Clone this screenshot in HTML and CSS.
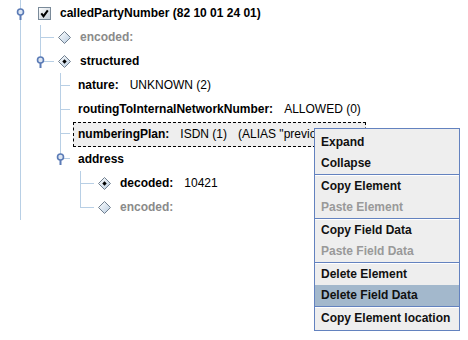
FILE: index.html
```html
<!DOCTYPE html>
<html lang="en">
<head>
    <meta charset="UTF-8">
    <title>Element tree</title>
    <link rel="stylesheet" href="styles.css">
</head>
<body>
    <div class="tree">
        <ul class="level">
            <li class="node root">
                <div class="row">
                    <span class="handle"><svg width="9" height="13" viewBox="0 0 9 13"><rect x="3.5" y="6" width="2" height="6" fill="#5b7bb6"/><circle cx="4.5" cy="4" r="3" fill="#dde6f2" stroke="#5b7bb6" stroke-width="1.6"/></svg></span>
                    <span class="icon"><svg width="13" height="13" viewBox="0 0 13 13"><defs><linearGradient id="cb" x1="0" y1="0" x2="1" y2="1"><stop offset="0" stop-color="#ffffff"/><stop offset="1" stop-color="#c2ccd6"/></linearGradient></defs><rect x="0.5" y="0.5" width="12" height="12" fill="url(#cb)" stroke="#7a8a99"/><path d="M3.3 6.3 L5.5 9.2 L9.8 3.3" fill="none" stroke="#000" stroke-width="2"/></svg></span>
                    <span class="label"><b>calledPartyNumber (82 10 01 24 01)</b></span>
                </div>
                <ul class="level">
                    <li class="node">
                        <div class="row link">
                            <span class="icon"><svg width="13" height="13" viewBox="0 0 13 13"><defs><linearGradient id="dm" x1="0" y1="0" x2="1" y2="1"><stop offset="0" stop-color="#ffffff"/><stop offset="1" stop-color="#b8cce0"/></linearGradient></defs><path d="M6.5 0.5 L12.5 6.5 L6.5 12.5 L0.5 6.5 Z" fill="url(#dm)" stroke="#707f8f"/></svg></span>
                            <span class="label muted"><b>encoded:</b></span>
                        </div>
                    </li>
                    <li class="node">
                        <div class="row link">
                            <span class="handle"><svg width="9" height="13" viewBox="0 0 9 13"><rect x="3.5" y="6" width="2" height="6" fill="#5b7bb6"/><circle cx="4.5" cy="4" r="3" fill="#dde6f2" stroke="#5b7bb6" stroke-width="1.6"/></svg></span>
                            <span class="icon"><svg width="13" height="13" viewBox="0 0 13 13"><path d="M6.5 0.5 L12.5 6.5 L6.5 12.5 L0.5 6.5 Z" fill="url(#dm)" stroke="#707f8f"/><path d="M6.5 4.3 L8.7 6.5 L6.5 8.7 L4.3 6.5 Z" fill="#000"/></svg></span>
                            <span class="label"><b>structured</b></span>
                        </div>
                        <ul class="level">
                            <li class="node">
                                <div class="row link short">
                                    <span class="label"><b>nature:</b><span class="value">UNKNOWN (2)</span></span>
                                </div>
                            </li>
                            <li class="node">
                                <div class="row link short">
                                    <span class="label"><b>routingToInternalNetworkNumber:</b><span class="value">ALLOWED (0)</span></span>
                                </div>
                            </li>
                            <li class="node">
                                <div class="row link short tall">
                                    <span class="label focused"><b>numberingPlan:</b><span class="value">ISDN (1)</span><span class="value">(ALIAS "previo</span></span>
                                </div>
                            </li>
                            <li class="node">
                                <div class="row link short tall">
                                    <span class="handle"><svg width="9" height="13" viewBox="0 0 9 13"><rect x="3.5" y="6" width="2" height="6" fill="#5b7bb6"/><circle cx="4.5" cy="4" r="3" fill="#dde6f2" stroke="#5b7bb6" stroke-width="1.6"/></svg></span>
                                    <span class="label"><b>address</b></span>
                                </div>
                                <ul class="level">
                                    <li class="node">
                                        <div class="row link">
                                            <span class="icon"><svg width="13" height="13" viewBox="0 0 13 13"><path d="M6.5 0.5 L12.5 6.5 L6.5 12.5 L0.5 6.5 Z" fill="url(#dm)" stroke="#707f8f"/><path d="M6.5 4.3 L8.7 6.5 L6.5 8.7 L4.3 6.5 Z" fill="#000"/></svg></span>
                                            <span class="label"><b>decoded:</b><span class="value">10421</span></span>
                                        </div>
                                    </li>
                                    <li class="node">
                                        <div class="row link">
                                            <span class="icon"><svg width="13" height="13" viewBox="0 0 13 13"><path d="M6.5 0.5 L12.5 6.5 L6.5 12.5 L0.5 6.5 Z" fill="url(#dm)" stroke="#707f8f"/></svg></span>
                                            <span class="label muted"><b>encoded:</b></span>
                                        </div>
                                    </li>
                                </ul>
                            </li>
                        </ul>
                    </li>
                </ul>
            </li>
        </ul>
    </div>

    <div class="menu">
        <div class="item">Expand</div>
        <div class="item">Collapse</div>
        <div class="sep"></div>
        <div class="item">Copy Element</div>
        <div class="item disabled">Paste Element</div>
        <div class="sep"></div>
        <div class="item">Copy Field Data</div>
        <div class="item disabled">Paste Field Data</div>
        <div class="sep"></div>
        <div class="item">Delete Element</div>
        <div class="item active">Delete Field Data</div>
        <div class="sep"></div>
        <div class="item">Copy Element location</div>
    </div>
</body>
</html>
```

FILE: styles.css
```css
* {
    box-sizing: border-box;
}

body {
    margin: 0;
    width: 468px;
    height: 340px;
    background: #fff;
    font-family: 'Liberation Sans', Arial, sans-serif;
    font-size: 12px;
    color: #000;
    overflow: hidden;
    position: relative;
}

/* Tree */
.tree {
    padding: 1px 0 0 20px;
}

.level {
    list-style: none;
    margin: 0;
    padding: 0;
}

.level .level {
    padding-left: 20px;
}

.node {
    position: relative;
}

/* vertical line */
.node::before {
    content: '';
    position: absolute;
    left: 0;
    top: 0;
    bottom: 0;
    border-left: 1px solid #b8cfe5;
}

.node:last-child::before {
    bottom: auto;
    height: 12px;
}

.node.root::before {
    top: -1px;
    bottom: -1px;
    height: auto;
}

.row {
    position: relative;
    display: flex;
    align-items: center;
    height: 24px;
    white-space: nowrap;
}

.row.tall {
    height: 25px;
}

/* horizontal connector */
.row.link::before {
    content: '';
    position: absolute;
    left: 0;
    top: 12px;
    width: 14px;
    border-top: 1px solid #b8cfe5;
}

.row.short::before {
    width: 10px;
}

.handle {
    position: absolute;
    left: -4px;
    top: 7px;
    z-index: 1;
    line-height: 0;
}

.icon {
    margin-left: 18px;
    line-height: 0;
}

.label {
    margin-left: 4px;
    padding: 0 4px;
    border: 1px solid transparent;
    line-height: 22px;
}

.short .label {
    margin-left: 13px;
}

.label b {
    font-weight: bold;
}

.value {
    margin-left: 11px;
}

.muted {
    color: #8a8a8a;
}

.focused {
    display: inline-block;
    width: 293px;
    margin-top: 1px;
    line-height: 23px;
    background: #eeeeee;
    border: 1px dashed #000;
}

/* Popup menu */
.menu {
    position: absolute;
    z-index: 10;
    left: 314px;
    top: 128px;
    width: 146px;
    padding: 3px 0 1px;
    background: #eeeeee;
    border: 1px solid #6382bf;
    font-weight: bold;
}

.item {
    height: 21px;
    line-height: 21px;
    padding-left: 6px;
    color: #111;
    white-space: nowrap;
}

.item.disabled {
    color: #999999;
}

.item.active {
    background: #a3b8cc;
}

.sep {
    height: 2px;
    border-top: 1px solid #6382bf;
    border-bottom: 1px solid #ffffff;
}
```
